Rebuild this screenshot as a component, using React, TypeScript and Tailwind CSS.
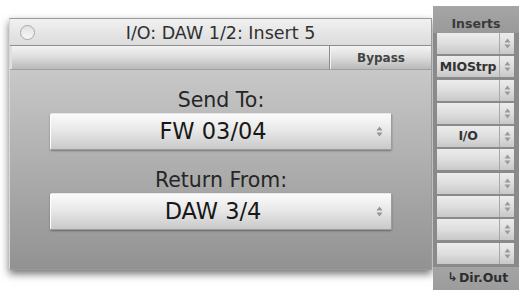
import React from "react";

function Arrows({ className }: { className?: string }) {
  return (
    <svg width="7" height="11" viewBox="0 0 7 11" className={className}>
      <path d="M3.5 0.5 L6.5 4.5 L0.5 4.5 Z" fill="currentColor" />
      <path d="M3.5 10.5 L6.5 6.5 L0.5 6.5 Z" fill="currentColor" />
    </svg>
  );
}

function Dropdown({ label }: { label: string }) {
  return (
    <div className="h-[37px] w-full flex items-center rounded-[2px] border border-[#9c9c9c] border-l-white border-t-[#e8e8e8] bg-gradient-to-b from-[#fbfbfb] via-[#e6e6e6] to-[#c9c9c9] shadow-[0_1px_2px_rgba(0,0,0,0.35)]">
      <div className="flex-1 text-center text-[22.5px] leading-none text-[#181818] pl-[6px]">{label}</div>
      <div className="w-[22px] flex justify-center text-[#959595] pr-[2px]">
        <Arrows />
      </div>
    </div>
  );
}

function Slot({ label }: { label?: string }) {
  return (
    <div className="h-[21px] flex bg-gradient-to-b from-[#ececec] via-[#dedede] to-[#c8c8c8]">
      <div className="flex-1 flex items-center justify-center text-[12.5px] font-bold text-[#333] leading-none tracking-[-0.2px]">
        {label ?? ""}
      </div>
      <div className="w-[15px] border-l border-[#a8a8a8] flex items-center justify-center text-[#9a9a9a]">
        <Arrows />
      </div>
    </div>
  );
}

export default function App() {
  const slots = ["", "MIOStrp", "", "", "I/O", "", "", "", "", ""];
  return (
    <div
      className="w-[520px] h-[290px] bg-white flex items-start overflow-hidden"
      style={{ fontFamily: '"DejaVu Sans", "Liberation Sans", sans-serif' }}
    >
      {/* Window */}
      <div className="ml-[9px] mt-[18px] w-[423px] h-[252px] flex flex-col border border-[#9a9a9a] border-l-[#d8d8d8] shadow-[0_4px_8px_rgba(0,0,0,0.55)]">
        {/* Title bar */}
        <div className="h-[27px] grid grid-cols-[40px_1fr_40px] items-center bg-gradient-to-b from-[#f1f1f1] to-[#dcdcdc] border-b border-[#8e8e8e]">
          <div className="pl-[10px] flex items-center">
            <div className="w-[15px] h-[15px] rounded-full border-[1.5px] border-[#a9a9a9] bg-gradient-to-b from-[#e2e2e2] to-[#f6f6f6]" />
          </div>
          <div className="text-center text-[17.5px] leading-none text-[#303030] pt-[3px] whitespace-nowrap">
            I/O: DAW 1/2: Insert 5
          </div>
          <div />
        </div>
        {/* Toolbar */}
        <div className="h-[24px] flex bg-gradient-to-b from-[#f4f4f4] via-[#dcdcdc] to-[#b9b9b9] border-b border-[#a0a0a0]">
          <div className="w-[2px] bg-[#e0e0e0]" />
          <div className="flex-1 border-r border-[#8c8c8c]" />
          <div className="w-[101px] flex items-center justify-center text-[12px] font-bold text-[#444] pt-[1px] border-l border-[#f4f4f4]">
            Bypass
          </div>
        </div>
        {/* Body */}
        <div className="flex-1 flex flex-col items-stretch pl-[40px] pr-[39px] pt-[18px] bg-gradient-to-b from-[#c8c8c8] via-[#adadad] to-[#929292]">
          <div className="h-[24px] flex items-center justify-center text-[20.5px] leading-none text-[#262626]">
            Send To:
          </div>
          <div className="mt-[1px]">
            <Dropdown label="FW 03/04" />
          </div>
          <div className="mt-[18px] h-[24px] flex items-center justify-center text-[20.5px] leading-none text-[#262626]">
            Return From:
          </div>
          <div className="mt-[1px]">
            <Dropdown label="DAW 3/4" />
          </div>
        </div>
      </div>

      {/* Inserts strip */}
      <div className="ml-[1px] mt-[6px] w-[86px] h-[284px] flex flex-col bg-[#8a8a8a]">
        <div className="h-[27px] flex items-end justify-center pb-[3px] text-[12.5px] font-bold text-[#3a3a3a] leading-none bg-gradient-to-b from-[#a6a6a6] to-[#999999]">
          Inserts
        </div>
        <div className="flex flex-col gap-[2.3px] pl-[4px] pr-[5px]">
          {slots.map((s, i) => (
            <Slot key={i} label={s} />
          ))}
        </div>
        <div className="mt-[3px] flex-1 flex items-center justify-center text-[12.5px] font-bold text-[#2e2e2e] leading-none bg-gradient-to-b from-[#a4a4a4] to-[#9c9c9c] pl-[4px]">
          <span className="text-[12px] font-bold mr-[1px] -mt-[3px]">↳</span>
          Dir.Out
        </div>
      </div>
    </div>
  );
}
